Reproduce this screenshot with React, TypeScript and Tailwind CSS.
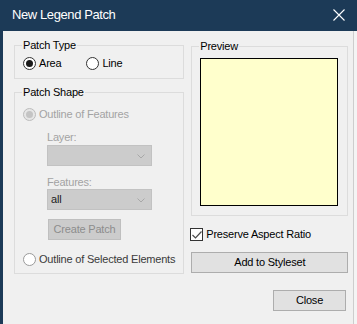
import type { ReactNode } from "react";

type RadioState = "on" | "off" | "disabledOn" | "faint";

function Radio({ state }: { state: RadioState }) {
  const ring =
    state === "disabledOn"
      ? "border-[#bcbcbc] bg-[#e6e6e6]"
      : state === "faint"
        ? "border-[#9a9a9a] bg-white"
        : "border-[#333333] bg-white";
  return (
    <span className={`flex h-[13px] w-[13px] shrink-0 items-center justify-center rounded-full border ${ring}`}>
      {state === "on" && <span className="h-[7px] w-[7px] rounded-full bg-[#1a1a1a]" />}
      {state === "disabledOn" && <span className="h-[7px] w-[7px] rounded-full bg-[#c4c4c4]" />}
    </span>
  );
}

function Group({ label, className, children }: { label: string; className: string; children: ReactNode }) {
  return (
    <fieldset className={`border border-[#dcdcdc] ${className}`}>
      <legend className="ml-[-1px] px-[1px] text-[11px] leading-[14px] text-black">{label}</legend>
      {children}
    </fieldset>
  );
}

function Select({ value }: { value?: string }) {
  return (
    <div className="flex h-[21px] w-[105px] items-center justify-between border border-[#c2c2c2] bg-[#cccccc] pl-[3px] pr-[6px]">
      <span className="text-[11px] text-[#222]">{value}</span>
      <svg width="8" height="5" viewBox="0 0 8 5" fill="none" className="mt-[1px]">
        <path d="M0.5 0.5 L4 4 L7.5 0.5" stroke="#a8a8a8" strokeWidth="1" />
      </svg>
    </div>
  );
}

export default function App() {
  return (
    <div className="flex h-[324px] w-[357px] flex-col bg-[#1c3a57] font-['Liberation_Sans',Arial,sans-serif] tracking-[-0.2px]">
      <div className="flex h-[31px] shrink-0 items-center justify-between pl-[12px] pr-[12px] pb-[1px]">
        <span className="text-[13px] tracking-[-0.4px] text-white">New Legend Patch</span>
        <svg width="12" height="12" viewBox="0 0 12 12" fill="none">
          <path d="M0.5 0.5 L11.5 11.5 M11.5 0.5 L0.5 11.5" stroke="#ffffff" strokeWidth="1.1" />
        </svg>
      </div>

      <div className="flex flex-1 border-l-[3px] border-[#1c3a57] bg-[#f4f4f4]">
        <div className="flex w-[351px] flex-col border-r border-[#cdcdcd] bg-[#f0f0f0] pl-[11px] pr-[5px] pt-[7px]">
          <div className="flex gap-[7px]">
            <div className="flex w-[171px] flex-col">
              <Group label="Patch Type" className="h-[41px] px-[8px]">
                <div className="mt-[5px] flex h-[13px] items-center text-[11px] text-black">
                  <Radio state="on" />
                  <span className="ml-[3px]">Area</span>
                  <span className="ml-[25px]">
                    <Radio state="off" />
                  </span>
                  <span className="ml-[3px]">Line</span>
                </div>
              </Group>

              <Group label="Patch Shape" className="mt-[6px] h-[189px] px-[8px]">
                <div className="mt-[9px] flex h-[13px] items-center text-[11px] text-[#a3a3a3]">
                  <Radio state="disabledOn" />
                  <span className="ml-[3px]">Outline of Features</span>
                </div>
                <div className="ml-[24px] flex flex-col">
                  <span className="mt-[9px] text-[11px] leading-[14px] text-[#a3a3a3]">Layer:</span>
                  <div className="mt-[1px]">
                    <Select />
                  </div>
                  <span className="mt-[9px] text-[11px] leading-[14px] text-[#a3a3a3]">Features:</span>
                  <Select value="all" />
                  <button
                    type="button"
                    className="ml-[1px] mt-[9px] flex h-[21px] w-[73px] items-center justify-center border border-[#bfbfbf] bg-[#cccccc] text-[11px] text-[#8c8c8c]"
                  >
                    Create Patch
                  </button>
                </div>
                <div className="mt-[13px] flex h-[13px] items-center whitespace-nowrap text-[11px] text-[#3a3a3a]">
                  <Radio state="faint" />
                  <span className="ml-[3px]">Outline of Selected Elements</span>
                </div>
              </Group>
            </div>

            <div className="mt-[1px] flex w-[157px] flex-col">
              <Group label="Preview" className="h-[177px] pl-[8px] pr-[9px]">
                <div className="mt-[5px] h-[148px] w-[138px] border border-black bg-[#ffffcc]" />
              </Group>
              <div className="mt-[12px] flex h-[13px] items-center text-[11px] text-black">
                <span className="ml-[-1px] flex h-[13px] w-[13px] items-center justify-center border border-[#333333] bg-white">
                  <svg width="10" height="8" viewBox="0 0 10 8" fill="none">
                    <path d="M0.5 4 L3.5 7 L9.5 0.5" stroke="#4a4a4a" strokeWidth="1.2" />
                  </svg>
                </span>
                <span className="ml-[3px]">Preserve Aspect Ratio</span>
              </div>
              <button
                type="button"
                className="mt-[11px] flex h-[21px] w-full items-center justify-center border border-[#adadad] bg-[#e1e1e1] text-[11px] text-black"
              >
                Add to Styleset
              </button>
            </div>
          </div>

          <div className="mt-[16px] flex justify-end pr-[2px]">
            <button
              type="button"
              className="flex h-[21px] w-[73px] items-center justify-center border border-[#adadad] bg-[#e1e1e1] text-[11px] text-black"
            >
              Close
            </button>
          </div>
        </div>
      </div>
    </div>
  );
}
